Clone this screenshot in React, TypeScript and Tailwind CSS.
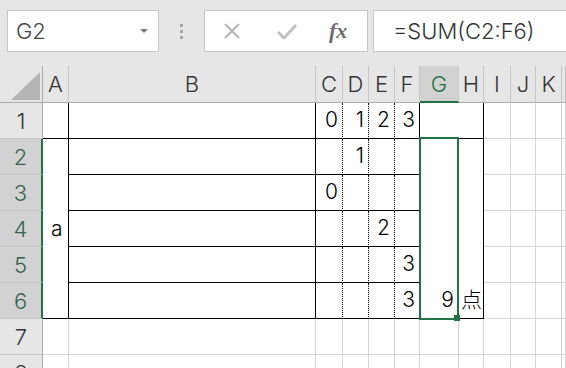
import React from "react";

type B = "g" | "k" | "d" | "n";

const RB: Record<B, string> = {
  g: "[border-right:1px_solid_#d4d4d4]",
  k: "[border-right:1px_solid_#000000]",
  d: "[border-right:1px_dotted_#000000]",
  n: "[border-right:1px_solid_#ffffff]",
};
const BB: Record<B, string> = {
  g: "[border-bottom:1px_solid_#d4d4d4]",
  k: "[border-bottom:1px_solid_#000000]",
  d: "[border-bottom:1px_dotted_#000000]",
  n: "[border-bottom:1px_solid_#ffffff]",
};

const COLS = ["A", "B", "C", "D", "E", "F", "G", "H", "I", "J", "K", "L"];

type Cell = {
  key: string;
  r: B;
  b: B;
  span?: string;
  text?: string;
  align?: "right" | "left" | "midleft";
};

const VAL: Record<string, string> = {
  C1: "0",
  D1: "1",
  E1: "2",
  F1: "3",
  D2: "1",
  C3: "0",
  E4: "2",
  F5: "3",
  F6: "3",
};

function buildRow(row: number): Cell[] {
  const cells: Cell[] = [];
  for (const c of COLS) {
    const id = c + row;
    if (row >= 7) {
      cells.push({ key: id, r: "g", b: "g" });
      continue;
    }
    if (row === 1) {
      if (c === "H") continue;
      if (c === "A" || c === "B") cells.push({ key: id, r: "k", b: "k" });
      else if (c === "C" || c === "D" || c === "E")
        cells.push({ key: id, r: "d", b: "k", text: VAL[id], align: "right" });
      else if (c === "F")
        cells.push({ key: id, r: "k", b: "k", text: VAL[id], align: "right" });
      else if (c === "G")
        cells.push({ key: id, r: "k", b: "k", span: "col-span-2" });
      else cells.push({ key: id, r: "g", b: "g" });
      continue;
    }
    if (c === "A") {
      if (row === 2)
        cells.push({ key: id, r: "k", b: "k", span: "row-span-5", text: "a", align: "midleft" });
      continue;
    }
    if (c === "G") {
      if (row === 2)
        cells.push({ key: id, r: "n", b: "k", span: "row-span-5", text: "9", align: "right" });
      continue;
    }
    if (c === "H") {
      if (row === 2)
        cells.push({ key: id, r: "k", b: "k", span: "row-span-5", text: "点", align: "left" });
      continue;
    }
    if (c === "B") cells.push({ key: id, r: "k", b: "k" });
    else if (c === "C" || c === "D" || c === "E")
      cells.push({ key: id, r: "d", b: "k", text: VAL[id], align: "right" });
    else if (c === "F")
      cells.push({ key: id, r: "k", b: "k", text: VAL[id], align: "right" });
    else cells.push({ key: id, r: "g", b: "g" });
  }
  return cells;
}

function alignClass(a?: string) {
  if (a === "right") return "flex items-end justify-end pr-[4px] pb-[8px]";
  if (a === "left") return "flex items-end justify-start pl-[2px] pb-[8px]";
  if (a === "midleft") return "flex items-center justify-start pl-[8px]";
  return "";
}

const FONT = "[font-family:Inter,'Noto_Sans_CJK_JP',sans-serif]";

export default function App() {
  const rows = [1, 2, 3, 4, 5, 6, 7, 8];
  return (
    <div className={`w-[566px] h-[368px] overflow-hidden bg-[#e6e6e6] ${FONT}`}>
      {/* Toolbar */}
      <div className="h-[66px] flex items-start pt-[10px]">
        <div className="ml-[7px] w-[152px] h-[42px] bg-white border border-[#c6c6c6] flex items-center pl-[8px] pr-[10px]">
          <span className="text-[22px] font-light text-[#444] leading-none">G2</span>
          <span className="ml-auto w-0 h-0 border-l-[4px] border-r-[4px] border-t-[4px] border-l-transparent border-r-transparent border-t-[#7a7a7a]" />
        </div>
        <div className="w-[45px] h-[42px] flex flex-col items-center justify-center gap-[3px]">
          <span className="w-[3px] h-[3px] bg-[#a8a8a8]" />
          <span className="w-[3px] h-[3px] bg-[#a8a8a8]" />
          <span className="w-[3px] h-[3px] bg-[#a8a8a8]" />
        </div>
        <div className="w-[164px] h-[42px] bg-white border border-[#c6c6c6] flex items-center">
          <svg width="18" height="16" viewBox="0 0 18 16" className="ml-[18px]">
            <path d="M2 1 L16 15 M16 1 L2 15" stroke="#b4b4b4" strokeWidth="2" fill="none" />
          </svg>
          <svg width="20" height="16" viewBox="0 0 20 16" className="ml-[36px]">
            <path d="M1 9 L7 15 L19 2" stroke="#c2c2c2" strokeWidth="3" fill="none" />
          </svg>
          <span className="ml-[32px] text-[22px] italic font-bold text-[#6e6e6e] leading-none [font-family:'Liberation_Serif',serif]">
            fx
          </span>
        </div>
        <div className="ml-[5px] flex-1 h-[42px] bg-white border border-[#c6c6c6] border-r-0 flex items-center pl-[19px]">
          <span className="text-[22px] font-light text-[#333] leading-none">=SUM(C2:F6)</span>
        </div>
      </div>

      {/* Sheet */}
      <div className="relative">
        <div className="grid grid-cols-[43px_26px_247px_27px_26px_26px_25px_39px_25px_27px_25px_26px_1fr] grid-rows-[37px_36px_36px_36px_36px_36px_36px_36px_36px]">
          <div className="bg-[#e6e6e6] [border-right:1px_solid_#ababab] [border-bottom:1px_solid_#ababab] relative">
            <svg width="29" height="28" viewBox="0 0 29 28" className="absolute left-[11px] top-[6px]">
              <path d="M29 0 L29 28 L0 28 Z" fill="#b5b5b5" />
            </svg>
          </div>
          {COLS.map((c) =>
            c === "G" ? (
              <div
                key={"h" + c}
                className="bg-[#d2d2d2] [border-right:1px_solid_#c6c6c6] [border-bottom:2px_solid_#217346] flex items-center justify-center text-[22px] font-light text-[#217346] leading-none"
              >
                {c}
              </div>
            ) : (
              <div
                key={"h" + c}
                className="bg-[#e6e6e6] [border-right:1px_solid_#c6c6c6] [border-bottom:1px_solid_#ababab] flex items-center justify-center text-[22px] font-light text-[#333] leading-none"
              >
                {c === "L" ? "" : c}
              </div>
            )
          )}
          {rows.map((r) => {
            const sel = r >= 2 && r <= 6;
            return (
              <React.Fragment key={"r" + r}>
                {sel ? (
                  <div className="bg-[#d2d2d2] [border-right:2px_solid_#217346] [border-bottom:1px_solid_#c6c6c6] flex items-center justify-center text-[22px] font-light text-[#35634a] leading-none">
                    {r}
                  </div>
                ) : (
                  <div className="bg-[#e6e6e6] [border-right:1px_solid_#ababab] [border-bottom:1px_solid_#c6c6c6] flex items-center justify-center text-[22px] font-light text-[#333] leading-none">
                    {r}
                  </div>
                )}
                {buildRow(r).map((cell) => (
                  <div
                    key={cell.key}
                    className={`bg-white ${RB[cell.r]} ${BB[cell.b]} ${cell.span ?? ""} ${alignClass(
                      cell.align
                    )} text-[21px] font-light text-black leading-none`}
                  >
                    {cell.text}
                  </div>
                ))}
              </React.Fragment>
            );
          })}
        </div>
        <div className="absolute left-[419px] top-[71px] w-[40px] h-[183px] border-2 border-[#217346] pointer-events-none" />
        <div className="absolute left-[454px] top-[249px] w-[6px] h-[6px] bg-[#217346]" />
      </div>
    </div>
  );
}
